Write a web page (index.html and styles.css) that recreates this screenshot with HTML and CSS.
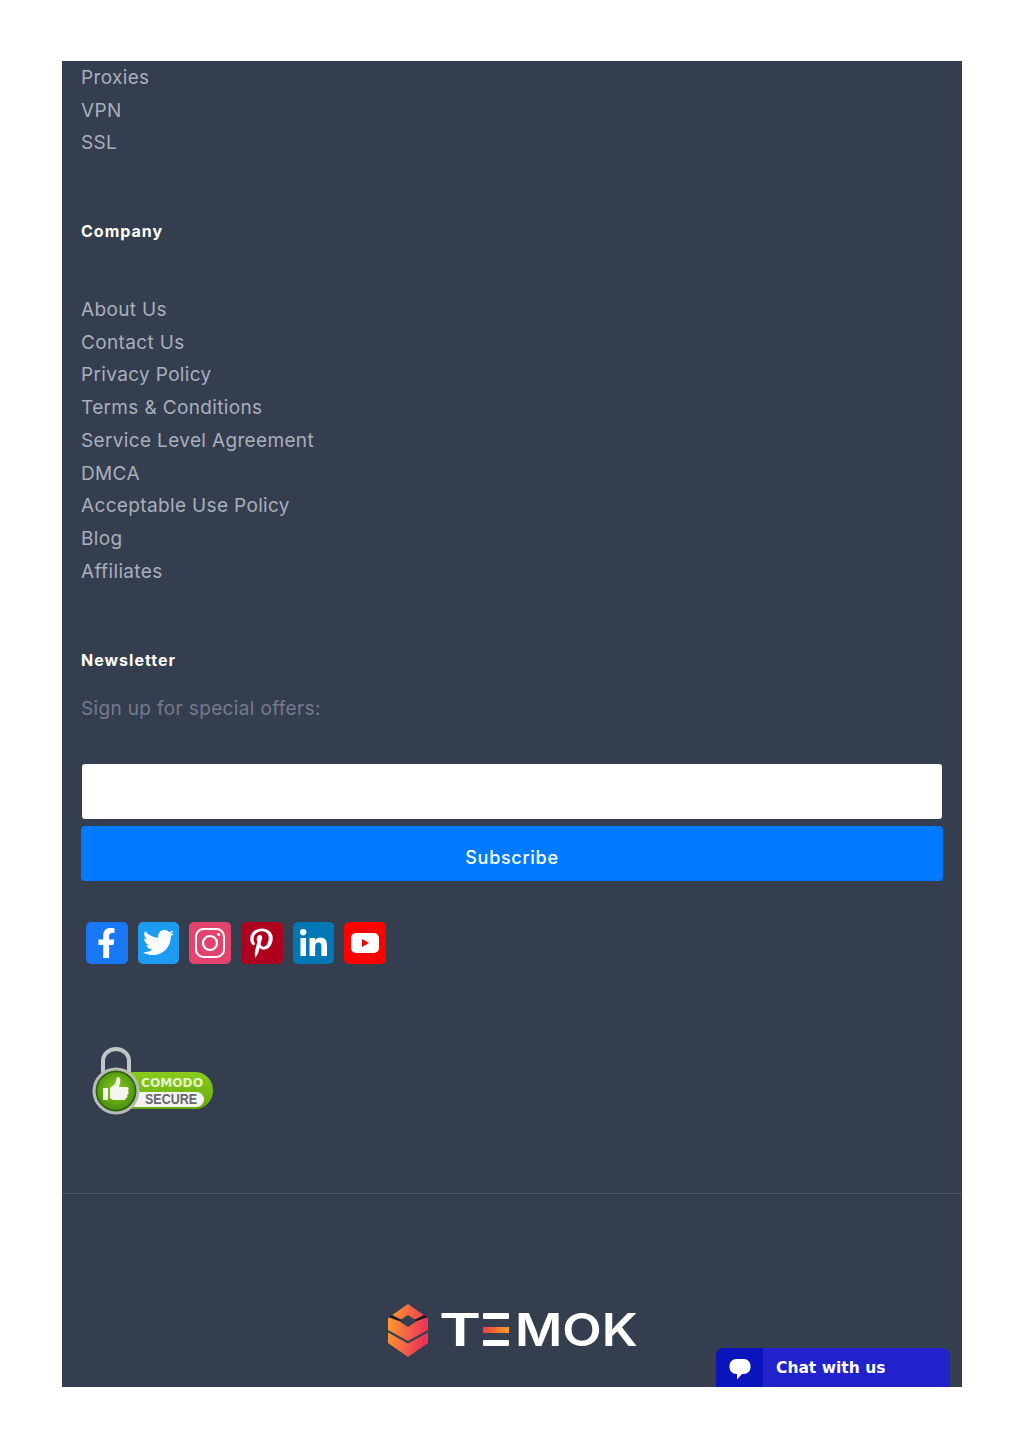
FILE: index.html
```html
<!DOCTYPE html>
<html lang="en">
<head>
  <meta charset="UTF-8">
  <meta name="viewport" content="width=device-width, initial-scale=1.0">
  <title>Temok footer</title>
  <link rel="stylesheet" href="styles.css">
</head>
<body>
  <footer class="footer">
    <ul class="link-list">
      <li><a href="#">Proxies</a></li>
      <li><a href="#">VPN</a></li>
      <li><a href="#">SSL</a></li>
    </ul>

    <h4 class="footer-title company-title">Company</h4>
    <ul class="link-list">
      <li><a href="#">About Us</a></li>
      <li><a href="#">Contact Us</a></li>
      <li><a href="#">Privacy Policy</a></li>
      <li><a href="#">Terms &amp; Conditions</a></li>
      <li><a href="#">Service Level Agreement</a></li>
      <li><a href="#">DMCA</a></li>
      <li><a href="#">Acceptable Use Policy</a></li>
      <li><a href="#">Blog</a></li>
      <li><a href="#">Affiliates</a></li>
    </ul>

    <h4 class="footer-title newsletter-title">Newsletter</h4>
    <p class="newsletter-text">Sign up for special offers:</p>
    <form class="newsletter-form">
      <input type="email" class="newsletter-input" aria-label="Email">
      <button type="button" class="newsletter-button">Subscribe</button>
    </form>

    <!-- social icons -->
    <div class="social">
      <a href="#" class="social-icon fb" aria-label="Facebook">
        <svg viewBox="0 0 320 512" width="19" height="30"><path fill="#fff" d="M279.14 288l14.22-92.66h-88.91v-60.13c0-25.35 12.42-50.06 52.24-50.06h40.42V6.26S260.43 0 225.36 0c-73.22 0-121.08 44.38-121.08 124.72v70.62H22.89V288h81.39v224h100.17V288z"/></svg>
      </a>
      <a href="#" class="social-icon tw" aria-label="Twitter">
        <svg viewBox="0 0 512 512" width="31" height="31"><path fill="#fff" d="M459.37 151.716c.325 4.548.325 9.097.325 13.645 0 138.72-105.583 298.558-298.558 298.558-59.452 0-114.68-17.219-161.137-47.106 8.447.974 16.568 1.299 25.34 1.299 49.055 0 94.213-16.568 130.274-44.832-46.132-.975-84.792-31.188-98.112-72.772 6.498.974 12.995 1.624 19.818 1.624 9.421 0 18.843-1.3 27.614-3.573-48.081-9.747-84.143-51.98-84.143-102.985v-1.299c13.969 7.797 30.214 12.67 47.431 13.319-28.264-18.843-46.781-51.005-46.781-87.391 0-19.492 5.197-37.36 14.294-52.954 51.655 63.675 129.3 105.258 216.365 109.807-1.624-7.797-2.599-15.918-2.599-24.04 0-57.828 46.782-104.934 104.934-104.934 30.213 0 57.502 12.67 76.67 33.137 23.715-4.548 46.456-13.32 66.599-25.34-7.798 24.366-24.366 44.833-46.132 57.827 21.117-2.273 41.584-8.122 60.426-16.243-14.292 20.791-32.161 39.308-52.628 54.253z"/></svg>
      </a>
      <a href="#" class="social-icon ig" aria-label="Instagram">
        <svg viewBox="0 0 32 32" width="32" height="32"><rect x="2" y="2" width="28" height="28" rx="7.5" fill="none" stroke="#fff" stroke-width="2"/><circle cx="16" cy="16" r="7" fill="none" stroke="#fff" stroke-width="2.2"/><circle cx="24.5" cy="7.5" r="1.6" fill="#fff"/></svg>
      </a>
      <a href="#" class="social-icon pin" aria-label="Pinterest">
        <svg viewBox="0 0 384 512" width="23" height="30"><path fill="#fff" d="M204 6.5C101.4 6.5 0 74.9 0 185.6 0 256 39.6 296 63.6 296c9.9 0 15.6-27.6 15.6-35.4 0-9.3-23.7-29.1-23.7-67.8 0-80.4 61.2-137.4 140.4-137.4 68.1 0 118.5 38.7 118.5 109.8 0 53.1-21.3 152.7-90.3 152.7-24.9 0-46.2-18-46.2-43.8 0-37.8 26.4-74.4 26.4-113.4 0-66.2-93.9-54.2-93.9 25.8 0 16.8 2.1 35.4 9.6 50.7-13.8 59.4-42 147.9-42 209.1 0 18.9 2.7 37.5 4.5 56.4 3.4 3.8 1.7 3.4 6.9 1.5 50.4-69 48.6-82.5 71.4-172.8 12.3 23.4 44.1 36 69.3 36 106.2 0 153.9-103.5 153.9-196.8C384 71.3 298.2 6.5 204 6.5z"/></svg>
      </a>
      <a href="#" class="social-icon li" aria-label="LinkedIn">
        <svg viewBox="0 0 448 448" width="27" height="27"><path fill="#fff" d="M100.28 448H7.4V148.9h92.88zM53.79 108.1C24.09 108.1 0 83.5 0 53.8a53.79 53.79 0 0 1 107.58 0c0 29.7-24.1 54.3-53.79 54.3zM447.9 448h-92.68V302.4c0-34.7-.7-79.2-48.29-79.2-48.29 0-55.69 37.7-55.69 76.7V448h-92.78V148.9h89.08v40.8h1.3c12.4-23.5 42.69-48.3 87.88-48.3 94 0 111.28 61.9 111.28 142.3V448z"/></svg>
      </a>
      <a href="#" class="social-icon yt" aria-label="YouTube">
        <svg viewBox="0 0 30 22" width="30" height="22"><rect x="1" y="1" width="28" height="20" rx="5" fill="#fff"/><path fill="#f00" d="M12 7v8l7-4z"/></svg>
      </a>
    </div>

    <!-- comodo badge -->
    <div class="badge">
      <svg viewBox="0 0 128 72" width="128" height="72">
        <defs>
          <linearGradient id="greenFill" x1="0" y1="0" x2="0" y2="1">
            <stop offset="0" stop-color="#8acb1c"/>
            <stop offset="1" stop-color="#64a80e"/>
          </linearGradient>
          <radialGradient id="ringFill" cx="0.5" cy="0.45" r="0.55">
            <stop offset="0" stop-color="#8cc81e"/>
            <stop offset="1" stop-color="#3f8a0c"/>
          </radialGradient>
        </defs>
        <path d="M15 28V15a13 12 0 0 1 26 0v13" fill="none" stroke="#c4c7c8" stroke-width="4"/>
        <rect x="28" y="26" width="97" height="37" rx="18" fill="url(#greenFill)"/>
        <rect x="38" y="46" width="78" height="15" rx="7.5" fill="#f3f4ee"/>
        <text class="badge-top" x="53" y="41" textLength="62" lengthAdjust="spacingAndGlyphs">COMODO</text>
        <text class="badge-bottom" x="57" y="58" textLength="52" lengthAdjust="spacingAndGlyphs">SECURE</text>
        <circle cx="28" cy="45" r="22" fill="url(#ringFill)" stroke="#b9bcbc" stroke-width="3"/>
        <circle cx="28" cy="45" r="19.5" fill="none" stroke="#2f5f10" stroke-width="1.5"/>
        <path fill="#f4f6ee" d="M15 42h5v12h-5zM22 42l5-4 2-7c3 0 4 2 3 6l-1 4h8c2 0 2 3 1 4 1 1 1 3-1 4 1 1 0 3-1 3 0 1-1 2-2 2H25l-3-2z"/>
      </svg>
    </div>

    <hr class="footer-line">

    <div class="logo">
      <svg viewBox="0 -6 250 66" width="250" height="66" role="img" aria-label="Temok">
        <defs>
          <linearGradient id="cubeFill" x1="0" y1="0" x2="1" y2="0.25">
            <stop offset="0" stop-color="#fba52a"/>
            <stop offset="1" stop-color="#ee3358"/>
          </linearGradient>
          <linearGradient id="barFill" x1="0" y1="0" x2="1" y2="0">
            <stop offset="0" stop-color="#ee3d46"/>
            <stop offset="1" stop-color="#f8a11f"/>
          </linearGradient>
        </defs>
        <path fill="url(#cubeFill)" d="M20 0l20 14v25L20 53 0 39V14z"/>
        <path fill="#353f4f" d="M20 11l9 6-9 6-9-6z"/>
        <path fill="#1d1a22" d="M0 13l11 4 3-1-10-5zM40 13l-11 4-3-1 10-5z"/>
        <path fill="#353f4f" d="M0 26l20 11 20-11v2.500L20 39.500 0 28.500z"/>
        <text class="logo-text" transform="translate(51 42) scale(1.42 1)">T</text>
        <rect x="95" y="9" width="26" height="6" rx="1" fill="#fff"/>
        <rect x="95" y="23" width="26" height="6" fill="url(#barFill)"/>
        <rect x="95" y="36" width="26" height="6" rx="1" fill="#fff"/>
        <text class="logo-text" transform="translate(127 42) scale(1.14 1)">MOK</text>
      </svg>
    </div>

    <!-- chat widget -->
    <div class="chat">
      <span class="chat-icon">
        <svg viewBox="0 0 22 21" width="22" height="21"><path fill="#fff" d="M7 0h8a6.500 6.500 0 0 1 6.500 6.500v2A6.500 6.500 0 0 1 15 15h-2l-5 5.500V15H7A6.500 6.500 0 0 1 .5 8.500v-2A6.500 6.500 0 0 1 7 0z"/></svg>
      </span>
      <span class="chat-label">Chat with us</span>
    </div>
  </footer>
</body>
</html>
```
FILE: styles.css
```css
body {
  margin: 61px 62px;
  background-color: #fff;
  font-family: Inter, sans-serif;
}
.footer {
  position: relative;
  height: 1326px;
  overflow: hidden;
  background-color: #343e4f;
  padding: 0.9px 19px 0;
  box-sizing: border-box;
}
.link-list {
  list-style: none;
  margin: 0;
  padding: 0;
}
.link-list li {
  height: 32.75px;
  line-height: 32.75px;
}
.link-list a {
  color: #a9afbc;
  font-size: 19px;
  letter-spacing: 0.35px;
  text-decoration: none;
}
.footer-title {
  margin: 0;
  color: #fff;
  font-size: 16px;
  font-weight: 700;
  letter-spacing: 1px;
  line-height: 24px;
}
.company-title {
  margin-top: 59.1px;
  margin-bottom: 50.7px;
}
.newsletter-title {
  margin-top: 59.3px;
}
.newsletter-text {
  margin: 23.5px 0 0;
  color: #747b8b;
  font-size: 19px;
  letter-spacing: 0.35px;
  line-height: 28px;
}
.newsletter-form {
  margin-top: 40.5px;
}
.newsletter-input {
  display: block;
  width: 860px;
  height: 55px;
  margin: 0 1px 7px;
  padding: 0;
  border: 0;
  border-radius: 3px;
  background-color: #fff;
}
.newsletter-button {
  display: block;
  width: 100%;
  height: 55px;
  padding-top: 9px;
  border: 0;
  border-radius: 4px;
  background-color: #007bff;
  color: #fff;
  font-family: Inter, sans-serif;
  font-size: 18px;
  font-weight: 500;
  letter-spacing: 0.7px;
}
.social {
  display: flex;
  gap: 10px;
  margin: 41px 0 0 5px;
}
.social-icon {
  display: flex;
  align-items: center;
  justify-content: center;
  width: 41.7px;
  height: 42px;
  border-radius: 5px;
}
.fb { background-color: #1877f2; }
.tw { background-color: #1d9bf0; }
.ig { background-color: #e1446c; }
.pin { background-color: #b00020; }
.li { background-color: #0077b5; }
.yt { background-color: #f00; }
.badge {
  margin: 82px 0 0 7px;
  height: 72px;
}
.badge svg {
  display: block;
}
.badge-top {
  fill: #e6f2c8;
  font-family: "DejaVu Sans", sans-serif;
  font-size: 12px;
  font-weight: 700;
}
.badge-bottom {
  fill: #66666e;
  font-family: "Liberation Sans", sans-serif;
  font-size: 15px;
  font-weight: 700;
}
.footer-line {
  height: 1px;
  margin: 75px -19px 0;
  border: 0;
  background-color: #4c5564;
}
.logo {
  display: flex;
  justify-content: center;
  margin-top: 104px;
  padding-left: 2px;
}
.logo-text {
  fill: #fff;
  font-family: Inter, sans-serif;
  font-size: 45px;
  font-weight: 600;
}
.chat {
  position: absolute;
  top: 1287px;
  right: 12px;
  display: flex;
  width: 234px;
  height: 52px;
  border-radius: 8px 8px 0 0;
  overflow: hidden;
  background-color: #2222cc;
}
.chat-icon {
  display: flex;
  justify-content: center;
  width: 47px;
  padding-top: 11px;
  box-sizing: border-box;
  background-color: #0a14bd;
}
.chat-label {
  margin-left: 13px;
  color: #fff;
  font-family: "DejaVu Sans", sans-serif;
  font-size: 15.5px;
  font-weight: 700;
  line-height: 40px;
}
```
